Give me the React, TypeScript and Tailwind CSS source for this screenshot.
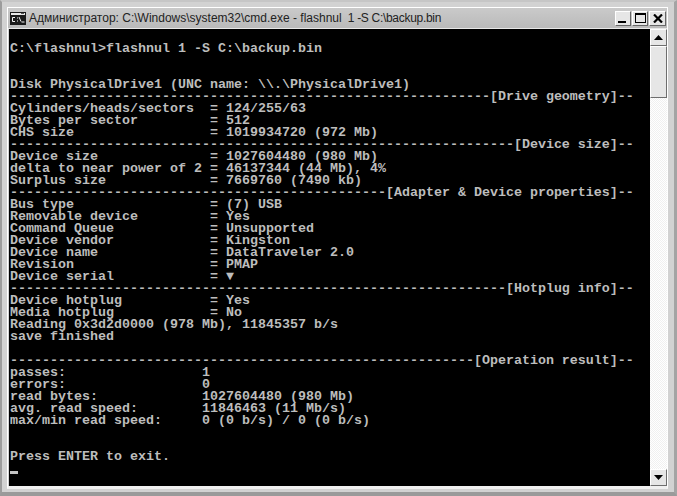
const dash = (n: number) => '-'.repeat(n)

const lines = [
  '',
  'C:\\flashnul>flashnul 1 -S C:\\backup.bin',
  '',
  '',
  'Disk PhysicalDrive1 (UNC name: \\\\.\\PhysicalDrive1)',
  dash(60) + '[Drive geometry]--',
  'Cylinders/heads/sectors  = 124/255/63',
  'Bytes per sector         = 512',
  'CHS size                 = 1019934720 (972 Mb)',
  dash(63) + '[Device size]--',
  'Device size              = 1027604480 (980 Mb)',
  'delta to near power of 2 = 46137344 (44 Mb), 4%',
  'Surplus size             = 7669760 (7490 kb)',
  dash(47) + '[Adapter & Device properties]--',
  'Bus type                 = (7) USB',
  'Removable device         = Yes',
  'Command Queue            = Unsupported',
  'Device vendor            = Kingston',
  'Device name              = DataTraveler 2.0',
  'Revision                 = PMAP',
  'Device serial            = ▼',
  dash(62) + '[Hotplug info]--',
  'Device hotplug           = Yes',
  'Media hotplug            = No',
  'Reading 0x3d2d0000 (978 Mb), 11845357 b/s',
  'save finished',
  '',
  dash(58) + '[Operation result]--',
  'passes:                 1',
  'errors:                 0',
  'read bytes:             1027604480 (980 Mb)',
  'avg. read speed:        11846463 (11 Mb/s)',
  'max/min read speed:     0 (0 b/s) / 0 (0 b/s)',
  '',
  '',
  'Press ENTER to exit.',
]

function CmdIcon() {
  return (
    <svg width="16" height="13" viewBox="0 0 16 13" className="shrink-0">
      <rect x="0" y="0" width="16" height="13" fill="#1a1a1a" />
      <rect x="1" y="1" width="14" height="2" fill="#e8e8e8" />
      <rect x="11" y="1" width="3" height="1" fill="#555" />
      <path d="M5 5.5H2.5v4H5M7.5 5.5v1M7.5 8.5v1M9 5l2 4.5M11.5 10h3" stroke="#f2f2f2" strokeWidth="1" fill="none" />
    </svg>
  )
}

function CaptionButton({ wide, children }: { wide?: boolean; children: React.ReactNode }) {
  return (
    <div className={`${wide ? 'w-[17px]' : 'w-[16px]'} h-[15px] flex items-center justify-center bg-[#e6e6e6] border border-t-white border-l-white border-r-[#666] border-b-[#666]`}>
      {children}
    </div>
  )
}

function ScrollButton({ up }: { up?: boolean }) {
  return (
    <div className="w-[17px] h-[17px] shrink-0 flex items-center justify-center bg-[#e6e6e6] border border-t-white border-l-white border-r-[#6e6e6e] border-b-[#6e6e6e]">
      <svg width="9" height="5" viewBox="0 0 9 5">
        <path d={up ? 'M4.5 0L9 5H0z' : 'M0 0h9L4.5 5z'} fill="#000" />
      </svg>
    </div>
  )
}

export default function App() {
  return (
    <div className="w-[677px] h-[496px] overflow-hidden bg-[#d2d2d2] border-l-2 border-t-2 border-r-[3px] border-b-[4px] border-l-[#9c9c9c] border-t-[#c6c6c6] border-r-[#a4a4a4] border-b-[#9a9a9a] pl-[5px] pt-[5px] pr-[6px] pb-[3px]">
      <div className="h-full border-t border-l border-r border-white border-b-[3px] border-b-[#f0f0f0] flex flex-col">
        {/* Title bar */}
        <div className="h-[21px] shrink-0 flex items-center pl-[2px] pr-[1px] bg-gradient-to-b from-[#cacaca] to-[#bababa] border-b border-b-[#e8e8e8]">
          <CmdIcon />
          <span className="ml-[3px] text-[12px] text-[#222] font-['Liberation_Sans',sans-serif] whitespace-pre">
            Администратор: C:\Windows\system32\cmd.exe - flashnul
            <span className="tracking-[-0.3px]">  1 -S C:\backup.bin</span>
          </span>
          <div className="ml-auto flex gap-[1px]">
            <CaptionButton>
              <div className="w-[8px] h-[2px] bg-black mt-[8px] -ml-[2px]" />
            </CaptionButton>
            <CaptionButton>
              <div className="w-[11px] h-[10px] border border-t-2 border-black" />
            </CaptionButton>
            <CaptionButton wide>
              <svg width="10" height="9" viewBox="0 0 10 9">
                <path d="M1 0.5l8 8M9 0.5l-8 8" stroke="#000" strokeWidth="2.2" />
              </svg>
            </CaptionButton>
          </div>
        </div>

        {/* Console */}
        <div className="flex flex-1 min-h-0 ml-[1px]">
          <div className="w-[641px] pl-[1px] pt-[2px] bg-black text-[#bdbdbd] font-['Liberation_Mono',monospace] text-[13.33px] font-bold leading-[12px]">
            {lines.map((line, i) => (
              <div key={i} className="h-[12px] whitespace-pre">{line}</div>
            ))}
            <div className="w-[8px] h-[3px] mt-[8px] bg-[#c4c4c4]" />
          </div>
          <div className="w-[17px] flex flex-col bg-[repeating-conic-gradient(#f0f0f0_0_25%,#ffffff_0_50%)] bg-[length:2px_2px]">
            <ScrollButton up />
            <div className="h-[52px] shrink-0 bg-[#e6e6e6] border border-t-white border-l-white border-r-[#6e6e6e] border-b-[#6e6e6e]" />
            <div className="flex-1" />
            <ScrollButton />
          </div>
        </div>
      </div>
    </div>
  )
}
